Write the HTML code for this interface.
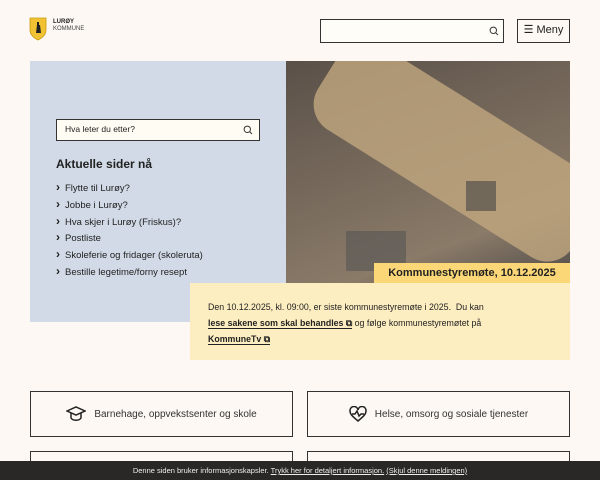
<!DOCTYPE html><html><head><style>
html,body{margin:0;width:600px;height:480px;overflow:hidden}
body{background:#fdf8f3;font-family:"Liberation Sans",sans-serif;color:#222;position:relative}
.a{position:absolute}
.box{border:1.5px solid #333;box-sizing:border-box;background:#fdf8f3}
.card{position:absolute;border:1.5px solid #333;box-sizing:border-box;height:46px;display:flex;align-items:center;justify-content:center;font-size:10px;color:#333}
.card svg{margin-right:8px}
li{list-style:none;font-size:9.5px;height:16.8px;line-height:12px;color:#222}
li:before{content:"›";font-weight:bold;font-size:12px;margin-right:5px}
</style></head><body>
<svg class="a" style="left:29px;top:17px" width="18" height="24" viewBox="0 0 18 24"><path d="M1 1h16v12c0 5-4 8-8 10C5 21 1 18 1 13z" fill="#f1c232" stroke="#c99a10" stroke-width="0.8"/><path d="M7 16h5l-1-8h-3z" fill="#222"/><rect x="8" y="5" width="2" height="3" fill="#222"/></svg>
<div class="a" style="left:53px;top:19px;font-size:6px;line-height:7px;font-weight:bold">LURØY<br><span style="font-weight:normal;color:#444">KOMMUNE</span></div>
<div class="a box" style="left:320px;top:19px;width:184px;height:24px;background:#fffdf8"></div>
<svg class="a" style="left:489px;top:26px" width="10" height="10" viewBox="0 0 10 10"><circle cx="4.3" cy="4.3" r="3.2" fill="none" stroke="#333" stroke-width="1"/><path d="M6.6 6.6L9 9" stroke="#333" stroke-width="1"/></svg>
<div class="a box" style="left:517px;top:19px;width:53px;height:24px;font-size:11px;line-height:21px;text-align:center">☰ Meny</div>
<div class="a" style="left:30px;top:61px;width:256px;height:261px;background:#d1dae6"></div>
<div class="a box" style="left:56px;top:119px;width:204px;height:22px;background:#fffdf3;font-size:8.5px;line-height:19px;padding-left:8px">Hva leter du etter?</div>
<svg class="a" style="left:243px;top:125px" width="10" height="10" viewBox="0 0 10 10"><circle cx="4.3" cy="4.3" r="3.2" fill="none" stroke="#333" stroke-width="1"/><path d="M6.6 6.6L9 9" stroke="#333" stroke-width="1"/></svg>
<div class="a" style="left:56px;top:157px;font-size:12px;font-weight:bold">Aktuelle sider nå</div>
<ul class="a" style="left:56px;top:181px;margin:0;padding:0">
<li>Flytte til Lurøy?</li><li>Jobbe i Lurøy?</li><li>Hva skjer i Lurøy (Friskus)?</li><li>Postliste</li><li>Skoleferie og fridager (skoleruta)</li><li>Bestille legetime/forny resept</li></ul>
<div class="a" style="left:286px;top:61px;width:284px;height:222px;overflow:hidden;background:linear-gradient(160deg,#5a5048 0%,#6e6256 30%,#8a7a68 75%,#4e4a48 100%)">
<div class="a" style="left:20px;top:40px;width:300px;height:100px;transform:rotate(32deg);background:#c2a77f;opacity:.8;border-radius:30px"></div>
<div class="a" style="left:60px;top:170px;width:60px;height:40px;background:#555;opacity:.6"></div>
<div class="a" style="left:180px;top:120px;width:30px;height:30px;background:#444;opacity:.6"></div>
</div>
<div class="a" style="left:374px;top:263px;width:196px;height:20px;background:#fbd777;font-size:11px;font-weight:bold;line-height:20px;text-align:center">Kommunestyremøte, 10.12.2025</div>
<div class="a" style="left:190px;top:283px;width:380px;height:77px;background:#fdeec1"></div>
<div class="a" style="left:208px;top:299px;width:350px;font-size:8.8px;line-height:16px;color:#222">Den 10.12.2025, kl. 09:00, er siste kommunestyremøte i 2025.&nbsp; Du kan<br><b style="border-bottom:1px solid #222">lese sakene som skal behandles ⧉</b> og følge kommunestyremøtet på<br><b style="border-bottom:1px solid #222">KommuneTv ⧉</b></div>
<div class="card" style="left:30px;top:391px;width:263px"><svg width="20" height="18" viewBox="0 0 20 18" fill="none" stroke="#222" stroke-width="1.5"><path d="M1 6l9-4 9 4-9 4z"/><path d="M5 8v5c2 3 8 3 10 0V8"/></svg>Barnehage, oppvekstsenter og skole</div>
<div class="card" style="left:307px;top:391px;width:263px"><svg width="18" height="16" viewBox="0 0 18 16" fill="none" stroke="#222" stroke-width="1.5"><path d="M9 15C3 10 1 8 1 5a4 4 0 0 1 8-1 4 4 0 0 1 8 1c0 3-2 5-8 10z"/><path d="M3 8h3l2-3 2 5 2-2h3"/></svg>Helse, omsorg og sosiale tjenester</div>
<div class="card" style="left:30px;top:451px;width:263px;height:29px;border-bottom:none"></div>
<div class="card" style="left:307px;top:451px;width:263px;height:29px;border-bottom:none"></div>
<div class="a" style="left:0;top:461px;width:600px;height:19px;background:#2a2826;color:#eee;font-size:7.5px;line-height:19px;text-align:center">Denne siden bruker informasjonskapsler. <u>Trykk her for detaljert informasjon.</u> <u>(Skjul denne meldingen)</u></div>
</body></html>
